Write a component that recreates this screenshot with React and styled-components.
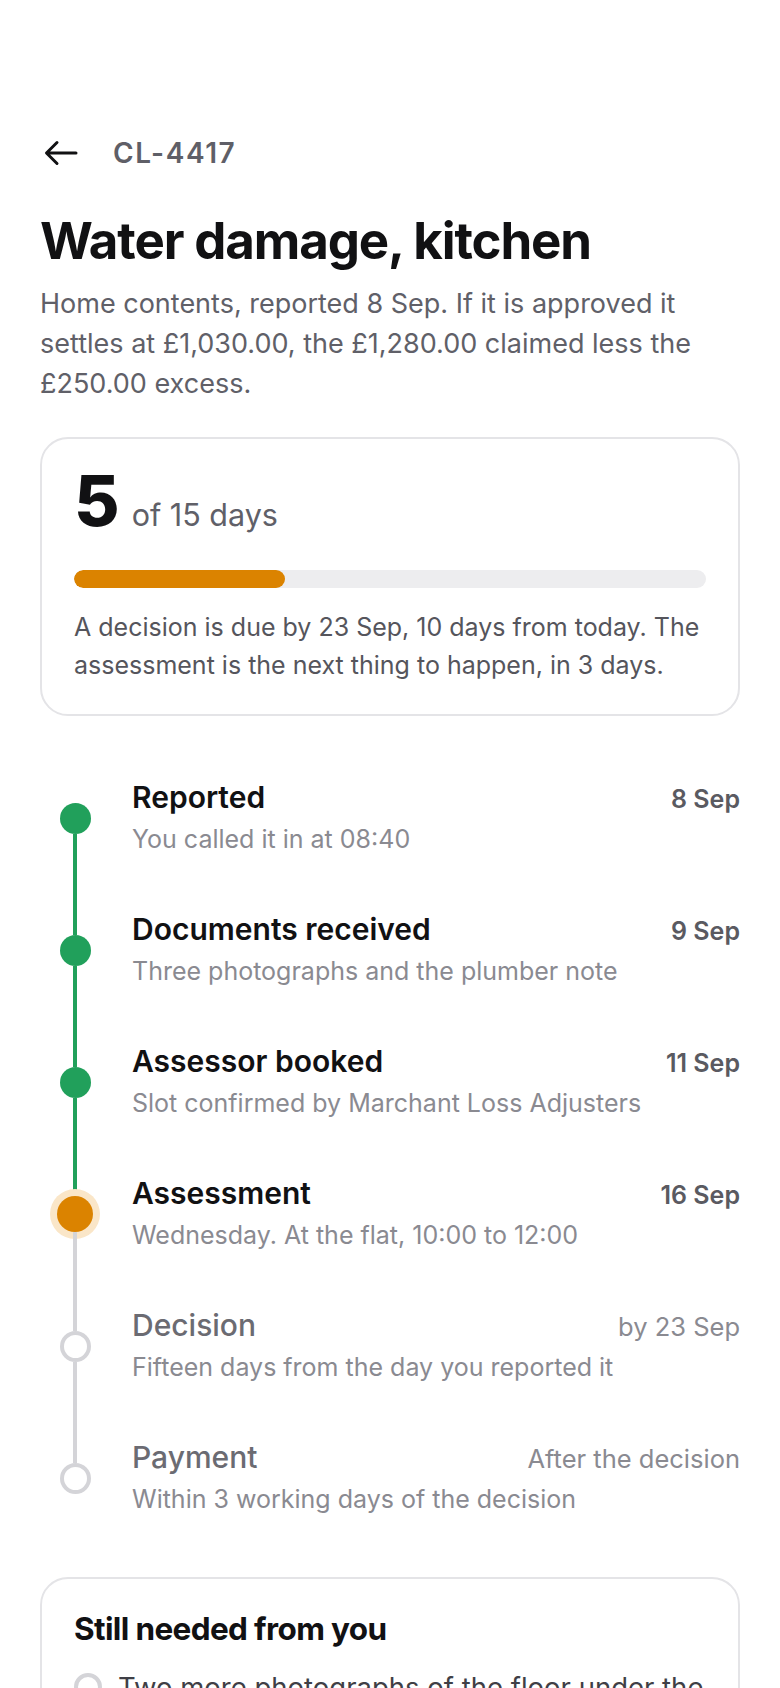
import styled, { createGlobalStyle } from 'styled-components'

const GlobalStyle = createGlobalStyle`
  body {
    margin: 0;
    background: #ffffff;
    font-family: Inter, "Noto Sans", "Liberation Sans", sans-serif;
    color: #111113;
  }
`

const steps = [
  { title: 'Reported', note: 'You called it in at 08:40', date: '8 Sep', state: 'done' },
  { title: 'Documents received', note: 'Three photographs and the plumber note', date: '9 Sep', state: 'done' },
  { title: 'Assessor booked', note: 'Slot confirmed by Marchant Loss Adjusters', date: '11 Sep', state: 'done' },
  { title: 'Assessment', note: 'Wednesday. At the flat, 10:00 to 12:00', date: '16 Sep', state: 'current' },
  { title: 'Decision', note: 'Fifteen days from the day you reported it', date: 'by 23 Sep', state: 'todo' },
  { title: 'Payment', note: 'Within 3 working days of the decision', date: 'After the decision', state: 'todo' }
]

const lineColor = (state) => (state === 'todo' ? '#d4d4d8' : '#21a05b')

export default function App () {
  const daysGone = 5
  const daysTotal = 15

  return (
    <>
      <GlobalStyle />
      <Page>
        <TopBar>
          <BackButton aria-label='Back'>
            <svg width='34' height='26' viewBox='0 0 34 26' fill='none'>
              <path d='M32 13H3M13 2.5 2.5 13 13 23.5' stroke='#111113' strokeWidth='3' strokeLinecap='round' strokeLinejoin='round' />
            </svg>
          </BackButton>
          <ClaimRef>CL-4417</ClaimRef>
        </TopBar>

        <Title>Water damage, kitchen</Title>
        <Lead>
          Home contents, reported 8 Sep. If it is approved it settles at £1,030.00, the £1,280.00 claimed less the £250.00 excess.
        </Lead>

        <Card>
          <DayCount>
            <BigNumber>{daysGone}</BigNumber>
            <OfDays>of {daysTotal} days</OfDays>
          </DayCount>
          <Track>
            <Fill style={{ width: `${(daysGone / daysTotal) * 100}%` }} />
          </Track>
          <CardText>
            A decision is due by 23 Sep, 10 days from today. The assessment is the next thing to happen, in 3 days.
          </CardText>
        </Card>

        <Timeline>
          {steps.map((step, i) => {
            const prev = steps[i - 1]
            const next = steps[i + 1]
            return (
              <Step key={step.title}>
                <Rail>
                  <Segment $color={prev ? lineColor(step.state === 'todo' ? 'todo' : 'done') : 'transparent'} />
                  <Dot $state={step.state} />
                  <Segment $color={next ? lineColor(next.state === 'todo' ? 'todo' : 'done') : 'transparent'} />
                </Rail>
                <StepBody>
                  <StepHead>
                    <StepTitle $muted={step.state === 'todo'}>{step.title}</StepTitle>
                    <StepDate $muted={step.state === 'todo'}>{step.date}</StepDate>
                  </StepHead>
                  <StepNote>{step.note}</StepNote>
                </StepBody>
              </Step>
            )
          })}
        </Timeline>

        <Card>
          <CardTitle>Still needed from you</CardTitle>
          <TodoList>
            <TodoItem>
              <Tick />
              <span>Two more photographs of the floor under the sink, once the units are pulled out</span>
            </TodoItem>
            <TodoItem>
              <Tick />
              <span>The plumber invoice for the repair to the pipe</span>
            </TodoItem>
          </TodoList>
        </Card>
      </Page>
    </>
  )
}

const Page = styled.div`
  padding: 128px 40px 60px;
`

const TopBar = styled.div`
  display: flex;
  align-items: center;
  gap: 35px;
  height: 50px;
`

const BackButton = styled.button`
  display: flex;
  align-items: center;
  padding: 0;
  margin-left: 4px;
  border: 0;
  background: none;
`

const ClaimRef = styled.div`
  font-size: 28px;
  font-weight: 600;
  letter-spacing: 0.055em;
  color: #5f5f67;
`

const Title = styled.h1`
  margin: 34px 0 0;
  font-size: 51px;
  line-height: 58px;
  font-weight: 700;
  letter-spacing: -0.022em;
  color: #111113;
`

const Lead = styled.p`
  margin: 14px 0 0;
  font-size: 27px;
  line-height: 40px;
  color: #606068;
`

const Card = styled.section`
  margin-top: 33px;
  border: 2px solid #e4e4e7;
  border-radius: 28px;
  padding: 30px 32px 30px;
`

const DayCount = styled.div`
  display: flex;
  align-items: baseline;
  gap: 12px;
`

const BigNumber = styled.span`
  font-size: 70px;
  line-height: 64px;
  font-weight: 800;
  color: #111113;
`

const OfDays = styled.span`
  font-size: 30.5px;
  color: #606068;
`

const Track = styled.div`
  margin-top: 37px;
  height: 18px;
  border-radius: 9px;
  background: #ededef;
  overflow: hidden;
`

const Fill = styled.div`
  height: 100%;
  border-radius: 9px;
  background: #db8300;
`

const CardText = styled.p`
  margin: 20px 0 0;
  font-size: 25px;
  line-height: 38px;
  color: #55555c;
`

const Timeline = styled.div`
  margin-top: 36px;
`

const Step = styled.div`
  display: grid;
  grid-template-columns: 70px 1fr;
  column-gap: 22px;
`

const Rail = styled.div`
  display: flex;
  flex-direction: column;
  align-items: center;
`

const Segment = styled.div`
  flex: 1;
  width: 4px;
  background: ${(p) => p.$color};
`

const Dot = styled.div`
  flex: none;
  box-sizing: border-box;
  border-radius: 50%;
  ${(p) => p.$state === 'done' && `
    width: 31px;
    height: 31px;
    background: #21a05b;
  `}
  ${(p) => p.$state === 'current' && `
    width: 36px;
    height: 36px;
    background: #db8300;
    box-shadow: 0 0 0 7px #fae6c8;
  `}
  ${(p) => p.$state === 'todo' && `
    width: 31px;
    height: 31px;
    background: #fff;
    border: 4px solid #d4d4d8;
  `}
`

const StepBody = styled.div`
  padding: 25px 0 25px;
`

const StepHead = styled.div`
  display: flex;
  justify-content: space-between;
  align-items: baseline;
  gap: 16px;
`

const StepTitle = styled.div`
  font-size: 30px;
  line-height: 40px;
  font-weight: ${(p) => (p.$muted ? 500 : 600)};
  color: ${(p) => (p.$muted ? '#6b6b72' : '#111113')};
`

const StepDate = styled.div`
  font-size: ${(p) => (p.$muted ? '25.5px' : '25px')};
  font-weight: ${(p) => (p.$muted ? 400 : 600)};
  color: ${(p) => (p.$muted ? '#8a8a91' : '#5a5a61')};
  white-space: nowrap;
`

const StepNote = styled.div`
  margin-top: 2px;
  font-size: 25px;
  line-height: 40px;
  color: #8a8a91;
`

const CardTitle = styled.h2`
  margin: 0;
  font-size: 31.5px;
  line-height: 40px;
  font-weight: 700;
  letter-spacing: -0.02em;
  color: #111113;
`

const TodoList = styled.ul`
  list-style: none;
  margin: 18px 0 0;
  padding: 0;
  display: flex;
  flex-direction: column;
  gap: 18px;
`

const TodoItem = styled.li`
  display: flex;
  align-items: flex-start;
  gap: 16px;
  font-size: 27.5px;
  line-height: 40px;
  color: #3f3f46;
`

const Tick = styled.span`
  flex: none;
  width: 28px;
  height: 28px;
  margin-top: 6px;
  box-sizing: border-box;
  border-radius: 50%;
  border: 4px solid #d4d4d8;
`
